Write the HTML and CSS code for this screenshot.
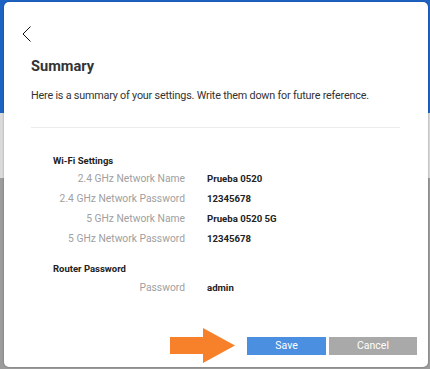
FILE: index.html
```html
<!DOCTYPE html>
<html lang="en">
<head>
    <meta charset="UTF-8">
    <meta name="viewport" content="width=device-width, initial-scale=1.0">
    <title>Summary</title>
    <link rel="stylesheet" href="styles.css">
</head>
<body>

    <div class="modal">
        <button class="back" aria-label="Back">
            <svg width="9" height="16" viewBox="0 0 9 16"><polyline points="8.5,0.5 1,8 8.5,15.5" fill="none" stroke="#111" stroke-width="1"/></svg>
        </button>

        <h1 class="title">Summary</h1>
        <p class="desc">Here is a summary of your settings. Write them down for future reference.</p>
        <div class="divider"></div>

        <div class="section">
            <h3>Wi-Fi Settings</h3>
            <div class="rows">
                <span class="label">2.4 GHz Network Name</span><span class="value">Prueba 0520</span>
                <span class="label">2.4 GHz Network Password</span><span class="value">12345678</span>
                <span class="label">5 GHz Network Name</span><span class="value">Prueba 0520 5G</span>
                <span class="label">5 GHz Network Password</span><span class="value">12345678</span>
            </div>
        </div>

        <div class="section router">
            <h3>Router Password</h3>
            <div class="rows">
                <span class="label">Password</span><span class="value">admin</span>
            </div>
        </div>

        <div class="footer">
            <svg class="arrow" width="66" height="35" viewBox="0 0 66 35"><polygon points="0,9 33,9 33,0 65,17.5 33,35 33,26 0,26" fill="#f7802a"/></svg>
            <button class="btn save">Save</button>
            <button class="btn cancel">Cancel</button>
        </div>
    </div>

</body>
</html>
```

FILE: styles.css
```css
* {
    margin: 0;
    padding: 0;
    box-sizing: border-box;
    font-family: Roboto, "Liberation Sans", sans-serif;
}

body {
    width: 430px;
    height: 369px;
    overflow: hidden;
    background: linear-gradient(to bottom, #1d63c4 0, #1d63c4 113px, #dadada 113px, #dadada 178px, #9c9c9c 178px);
    padding: 2px 2px 2px 4px;
}

.modal {
    width: 424px;
    height: 365px;
    background: #fff;
    border-radius: 5px;
    box-shadow: 0 0 2px rgba(0, 0, 0, 0.35);
    padding: 24px 11px 4px 27px;
    display: flex;
    flex-direction: column;
}

.back {
    width: 9px;
    height: 16px;
    margin-left: -9px;
    background: none;
    border: none;
    display: flex;
    cursor: pointer;
}

.title {
    font-size: 14.6px;
    font-weight: 700;
    line-height: 20px;
    color: #333;
    margin-top: 14px;
}

.desc {
    font-size: 10.8px;
    letter-spacing: -0.2px;
    line-height: 16px;
    color: #333;
    margin-top: 12px;
    white-space: nowrap;
}

.divider {
    height: 1px;
    background: #ececec;
    margin: 23px 0 0 0;
    width: 369px;
}

.section {
    padding-left: 22px;
    margin-top: 25px;
}

.section h3 {
    font-size: 9.5px;
    font-weight: 700;
    line-height: 16px;
    color: #222;
}

.router {
    margin-top: 12px;
}

.router .rows {
    margin-top: 1px;
}

.rows {
    display: grid;
    grid-template-columns: 132px auto;
    column-gap: 22px;
}

.label {
    text-align: right;
    font-size: 10.3px;
    line-height: 20px;
    color: #a0a0a0;
}

.value {
    font-size: 9.6px;
    font-weight: 700;
    line-height: 20px;
    color: #222;
}

.footer {
    margin-top: auto;
    display: flex;
    align-items: center;
    justify-content: flex-end;
}

.arrow {
    margin-right: 11px;
}

.btn {
    height: 18px;
    border: none;
    color: #fff;
    font-size: 10.5px;
    cursor: pointer;
}

.save {
    width: 79px;
    background: #4a8fe0;
    margin-right: 3px;
}

.cancel {
    width: 88px;
    background: #a9a9a9;
}
```
